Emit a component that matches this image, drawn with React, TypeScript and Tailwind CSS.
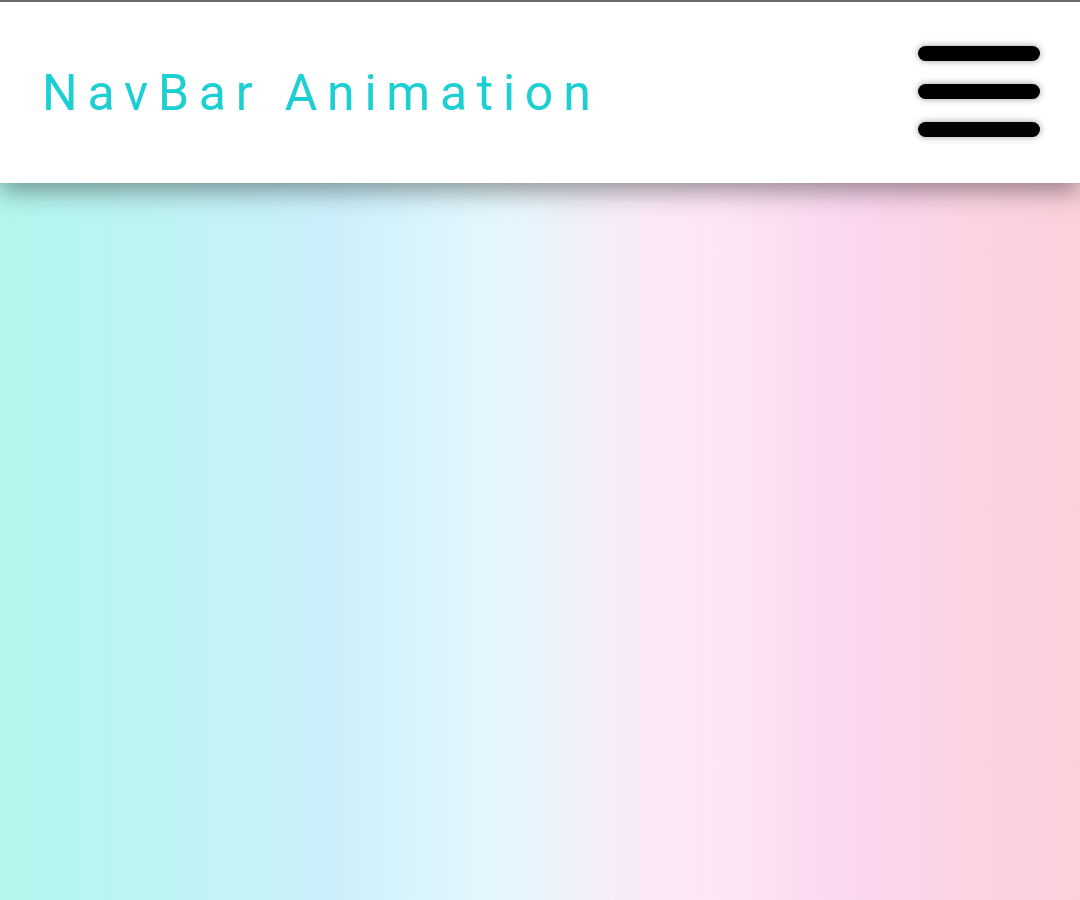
import React, { useState } from "react";

export default function App() {
  const [open, setOpen] = useState<boolean>(false);
  const barStyle =
    "block h-[15px] w-[122px] rounded-full bg-black shadow-[0_0_7px_rgba(0,0,0,0.4)]";

  return (
    <div className="flex h-[900px] w-full flex-col overflow-hidden border-t-2 border-[#6b6b6b] bg-[linear-gradient(to_right,#b3f6ee_0%,#c0f3f5_18%,#caf0fb_30%,#e4f7fd_46%,#eef1fa_53%,#fbe9f7_60%,#fde6f6_66%,#fad6f0_80%,#fdd3e3_90%,#fbd0da_100%)] font-['Roboto',sans-serif]">
      <header className="relative z-10 flex h-[181px] w-full flex-row items-center justify-between bg-white pl-[42px] pr-[40px] shadow-[0_8px_24px_rgba(0,0,0,0.4)]">
        <h1 className="text-[50px] font-normal leading-none tracking-[0.195em] text-[#1ccfd2]">
          NavBar Animation
        </h1>
        <button
          onClick={() => setOpen(!open)}
          className="flex flex-col gap-[23px] pb-[2px]"
          aria-label="menu"
        >
          <span className={barStyle}></span>
          <span className={barStyle}></span>
          <span className={barStyle}></span>
        </button>
      </header>
      <main className="flex-1"></main>
    </div>
  );
}
